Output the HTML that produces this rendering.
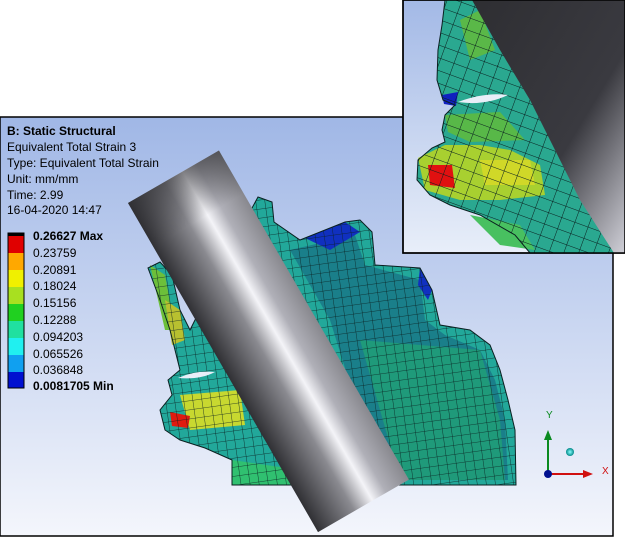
<!DOCTYPE html>
<html><head><meta charset="utf-8"><style>
html,body{margin:0;padding:0;background:#fff;width:625px;height:537px;overflow:hidden}
svg{display:block}
text{font-family:"Liberation Sans",sans-serif}
</style></head><body>
<svg width="625" height="537" viewBox="0 0 625 537" xmlns="http://www.w3.org/2000/svg">
<defs>
<linearGradient id="bg" x1="0" y1="0" x2="0" y2="1"><stop offset="0" stop-color="#a0b7e6"/><stop offset="1" stop-color="#f4f6fc"/></linearGradient>
<linearGradient id="bg2" x1="0" y1="0" x2="0" y2="1"><stop offset="0" stop-color="#a3b9e6"/><stop offset="1" stop-color="#e8eef9"/></linearGradient>
<linearGradient id="cyl" x1="0" y1="0" x2="1" y2="0"><stop offset="0" stop-color="#303034"/><stop offset="0.4" stop-color="#8a8a90"/><stop offset="0.6" stop-color="#f4f4f8"/><stop offset="0.75" stop-color="#b0b0b8"/><stop offset="1" stop-color="#88888e"/></linearGradient>
<linearGradient id="cyltop" x1="0" y1="0" x2="0" y2="1"><stop offset="0" stop-color="#303034" stop-opacity="0.6"/><stop offset="1" stop-color="#303034" stop-opacity="0"/></linearGradient>
<linearGradient id="cyl2" x1="0" y1="0" x2="1" y2="1"><stop offset="0" stop-color="#2e2e32"/><stop offset="0.6" stop-color="#3a3a40"/><stop offset="1" stop-color="#d0d0d8"/></linearGradient>
<pattern id="grid" width="9" height="9" patternUnits="userSpaceOnUse" patternTransform="rotate(-8)"><path d="M0 0H9M0 0V9" stroke="#0a2020" stroke-width="0.8" fill="none"/></pattern>
<pattern id="grid2" width="14" height="12" patternUnits="userSpaceOnUse" patternTransform="rotate(20)"><path d="M0 0H14M0 0V12" stroke="#0a2020" stroke-width="1" fill="none"/></pattern>
<radialGradient id="sph"><stop offset="0" stop-color="#8ff"/><stop offset="1" stop-color="#088"/></radialGradient>
</defs>
<rect x="0" y="117" width="613" height="419" fill="url(#bg)" stroke="#000" stroke-width="1.5"/>
<path d="M148 268 L160 262 L172 275 L180 310 L190 330 L205 300 L220 250 L240 230 L258 197 L272 202 L274 222 L300 240 L345 222 L360 220 L372 232 L375 265 L420 268 L432 290 L440 325 L470 330 L490 345 L500 370 L508 400 L515 430 L516 485 L232 485 L232 460 L205 448 L180 440 L165 430 L160 410 L172 395 L168 380 L180 370 L170 330 L160 300 Z" fill="#22a89a"/>
<path d="M290 250 L355 235 L365 265 L420 280 L425 320 L445 335 L480 350 L495 380 L505 420 L508 480 L380 480 L330 320 Z" fill="#1a7f8a"/>
<path d="M360 340 L480 350 L500 420 L505 480 L400 480 Z" fill="#1f9a7a"/>
<path d="M150 265 L165 275 L175 330 L165 330 Z" fill="#6cbf3a"/>
<path d="M165 300 L180 310 L185 340 L172 345 Z" fill="#b8c030"/>
<path d="M180 395 L240 390 L245 425 L190 430 Z" fill="#c8d830"/>
<path d="M170 412 L190 416 L188 428 L172 426 Z" fill="#e01a10"/>
<path d="M232 460 L300 470 L300 485 L232 485 Z" fill="#30c070"/>
<path d="M305 238 L345 222 L360 232 L330 250 Z" fill="#1030c0"/>
<path d="M420 268 L432 290 L428 300 L418 285 Z" fill="#1030c0"/>
<path d="M148 268 L160 262 L172 275 L180 310 L190 330 L205 300 L220 250 L240 230 L258 197 L272 202 L274 222 L300 240 L345 222 L360 220 L372 232 L375 265 L420 268 L432 290 L440 325 L470 330 L490 345 L500 370 L508 400 L515 430 L516 485 L232 485 L232 460 L205 448 L180 440 L165 430 L160 410 L172 395 L168 380 L180 370 L170 330 L160 300 Z" fill="url(#grid)" stroke="#0a2020" stroke-width="1"/>
<path d="M178 378 Q195 370 215 372 Q200 380 178 378 Z" fill="#e8eef8"/>
<g transform="translate(128,203) rotate(-30)">
<rect x="0" y="0" width="105" height="380" fill="url(#cyl)"/>
<rect x="0" y="0" width="105" height="50" fill="url(#cyltop)"/>
</g>
<text x="7" y="135" font-size="12" font-weight="bold">B: Static Structural</text>
<text x="7" y="151" font-size="12">Equivalent Total Strain 3</text>
<text x="7" y="167" font-size="12">Type: Equivalent Total Strain</text>
<text x="7" y="183" font-size="12">Unit: mm/mm</text>
<text x="7" y="199" font-size="12">Time: 2.99</text>
<text x="7" y="214" font-size="12">16-04-2020 14:47</text>
<rect x="8" y="233" width="16" height="3" fill="#000"/>
<rect x="8" y="236" width="16" height="17" fill="#e00000"/>
<rect x="8" y="253" width="16" height="17" fill="#ffa800"/>
<rect x="8" y="270" width="16" height="17" fill="#f0f000"/>
<rect x="8" y="287" width="16" height="17" fill="#a8e020"/>
<rect x="8" y="304" width="16" height="17" fill="#20d020"/>
<rect x="8" y="321" width="16" height="17" fill="#20e0a0"/>
<rect x="8" y="338" width="16" height="17" fill="#20f0f0"/>
<rect x="8" y="355" width="16" height="17" fill="#10a0f0"/>
<rect x="8" y="372" width="16" height="16" fill="#0010d0"/>
<rect x="8" y="233" width="16" height="155" fill="none" stroke="#000" stroke-width="1"/>
<g font-size="12"><text x="33" y="240" font-weight="bold">0.26627 Max</text><text x="33" y="257">0.23759</text><text x="33" y="274">0.20891</text><text x="33" y="290">0.18024</text><text x="33" y="307">0.15156</text><text x="33" y="324">0.12288</text><text x="33" y="341">0.094203</text><text x="33" y="358">0.065526</text><text x="33" y="374">0.036848</text><text x="33" y="390" font-weight="bold">0.0081705 Min</text></g>
<line x1="548" y1="474" x2="548" y2="438" stroke="#0a8a20" stroke-width="2"/><path d="M544 440 L548 430 L552 440Z" fill="#0a8a20"/>
<line x1="548" y1="474" x2="585" y2="474" stroke="#d01010" stroke-width="2"/><path d="M583 470 L593 474 L583 478Z" fill="#d01010"/>
<circle cx="548" cy="474" r="4" fill="#001090"/><circle cx="570" cy="452" r="4" fill="url(#sph)"/>
<text x="546" y="418" font-size="10" fill="#0a8a20">Y</text><text x="602" y="474" font-size="10" fill="#d01010">X</text>
<rect x="403" y="0" width="222" height="253" fill="url(#bg2)" stroke="#000" stroke-width="1.5"/>
<path d="M445 0 L475 0 L620 253 L530 253 L515 235 L480 215 L450 205 L430 195 L417 180 L418 160 L432 148 L445 142 L442 130 L445 115 L455 105 L443 100 L437 80 L438 50 L442 25 Z" fill="#2aa890"/>
<path d="M460 20 L480 10 L495 50 L470 60 Z" fill="#5ab848"/>
<path d="M418 158 L445 145 L480 145 L510 150 L540 165 L545 195 L500 200 L460 200 L425 190 Z" fill="#a8d030"/>
<path d="M480 160 L530 160 L535 185 L485 185 Z" fill="#d0d828"/>
<path d="M428 165 L452 165 L455 188 L430 185 Z" fill="#e01010"/>
<path d="M445 115 L500 112 L525 140 L470 142 L448 132 Z" fill="#58b848"/>
<path d="M442 95 L458 92 L456 106 L444 104 Z" fill="#1020c0"/>
<path d="M470 215 L520 225 L535 250 L500 245 Z" fill="#48c060"/>
<path d="M445 0 L475 0 L620 253 L530 253 L515 235 L480 215 L450 205 L430 195 L417 180 L418 160 L432 148 L445 142 L442 130 L445 115 L455 105 L443 100 L437 80 L438 50 L442 25 Z" fill="url(#grid2)" stroke="#0a2020" stroke-width="1"/>
<path d="M458 102 Q485 92 508 95 Q485 106 458 102 Z" fill="#e8eef8"/>
<path d="M472 0 L625 0 L625 253 L614 253 L580 200 L555 150 L530 100 L500 50 Z" fill="url(#cyl2)"/>
<rect x="403" y="0" width="222" height="253" fill="none" stroke="#000" stroke-width="1.5"/>
</svg>
</body></html>
